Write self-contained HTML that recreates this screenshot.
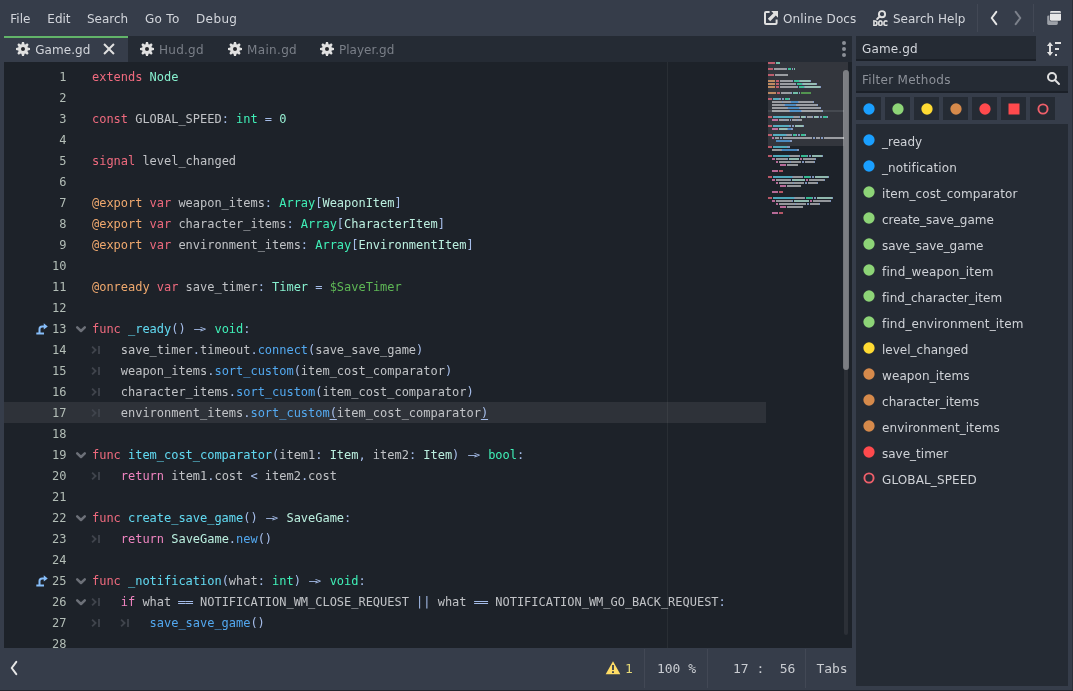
<!DOCTYPE html>
<html lang="en">
<head>
<meta charset="utf-8">
<title>Game.gd - Script Editor</title>
<style>
*{box-sizing:border-box;margin:0;padding:0}
html,body{width:1073px;height:691px;overflow:hidden;background:#363d4a}
body{position:relative;will-change:transform;font-family:"DejaVu Sans", "Liberation Sans", sans-serif;font-size:12px;color:#d2d5db;-webkit-font-smoothing:antialiased}
.abs,.ui,.sep,.ico{position:absolute}
svg{display:block}
.ui{white-space:nowrap;line-height:16px;height:16px}
/* top bar */
#topbar{position:absolute;left:0;top:0;width:1073px;height:36px;background:#363d4a}
.menu{top:11px;color:#d3d6dc}
.sep{width:1px;background:#424855}
.ico{width:16px;height:16px;fill:#e0e0e0}
/* tab bar */
#tabbar{position:absolute;left:4px;top:36px;width:848px;height:26px;background:#252b34}
#tab-active{position:absolute;left:0;top:0;width:124px;height:26px;background:#363d4a;border-top:2px solid #62b469}
.tab-t{top:42px}
.tab-t.dim{color:#7a7f88}
/* code area */
#code{position:absolute;left:4px;top:62px;width:848px;height:586px;background:#1d2229;overflow:hidden;
  font-family:"DejaVu Sans Mono", "Liberation Mono", monospace;font-size:12px;letter-spacing:-.024px;color:#cdcfd2}
#guide{position:absolute;left:663px;top:0;width:1px;height:586px;background:rgba(255,255,255,.055);z-index:2}
.ln{position:absolute;left:0;width:762px;height:21px;line-height:23px;white-space:pre}
.ln.cur{background:#2e3239}
.ln .no{position:absolute;left:0;width:62.4px;text-align:right;color:#b3beb7}
.ln .src{position:absolute;left:88px;top:0;tab-size:4;-moz-tab-size:4;opacity:.93}
.ln .fold{position:absolute;left:69.3px;top:2.7px;width:16px;height:16px;stroke:#6c7078}
.ln .ovr{position:absolute;left:30.6px;top:4px;width:14px;height:14px;fill:#86bdf9}
.tm{position:absolute;top:5.6px;width:10px;height:10px;stroke:#40454d}
.kw{color:#ff7085}.cf{color:#ff8ccc}.bt{color:#42ffc2}.et{color:#8fffdb}.ut{color:#c7ffed}
.sy,.ar,.eq{color:#b0c9f8}.nu{color:#a1ffe0}.fn{color:#57b3ff}.fd{color:#66e6ff}.an{color:#ffb373}
.nd{color:#63c259}
.ah,.ag,.e1,.e2{display:inline-block;height:21px;vertical-align:top}
.ah{transform:translate(1.7px,-.2px) scale(2.7,.8)}
.ag{transform:translate(-.6px,.3px) scale(.85,.72)}
.e1{transform:translate(.3px,0) scaleX(1.2)}
.e2{transform:translate(-.3px,0) scaleX(1.2)}
.bm{color:#b0c9f8;text-decoration:underline;text-underline-offset:2px}
/* minimap */
#mmview{position:absolute;left:764px;top:0;width:80px;height:84px;background:#33363d}
#mmcur{position:absolute;left:764px;top:48px;width:80px;height:2px;background:#454950}
.mm{position:absolute;left:764px;top:0;opacity:.68;overflow:hidden}
#vtrack{position:absolute;left:840px;top:8px;width:4px;height:565px;background:#2c3037;border-radius:2px}
#vthumb{position:absolute;left:839px;top:8px;width:6px;height:300px;background:rgba(255,255,255,.38);border-radius:3px}
#dots{position:absolute;left:842px;top:41px;width:4px;height:16px}
#dots i{position:absolute;left:0;width:4px;height:4px;border-radius:2px;background:#8b8f97}
/* status bar */
#status{position:absolute;left:0;top:648px;width:856px;height:43px;background:#363d4a}
.st{font-family:"DejaVu Sans Mono", "Liberation Mono", monospace;font-size:13px;color:#c9ccd1;top:661px;letter-spacing:-.03px;white-space:pre}
/* right panel */
.field{position:absolute;background:#252b34;border-bottom:2px solid #1b2028}
.ph{color:#8d9199}
.fb{position:absolute;top:97px;width:25px;height:23px;background:#252b34}
.fdot{position:absolute;left:4.7px;top:3.5px;width:16px;height:16px}
#list{position:absolute;left:856px;top:124px;width:212px;height:562px;background:#252b34}
.it{position:absolute;left:0;width:212px;height:26px}
.it .dot{position:absolute;left:5.3px;top:4.2px;width:16px;height:16px}
.it span{position:absolute;left:26px;top:6px;line-height:16px;white-space:nowrap;color:#cfd2d7}
#edge-r{position:absolute;left:1072px;top:0;width:1px;height:691px;background:#2a2f39}
#edge-b{position:absolute;left:0;top:690px;width:1073px;height:1px;background:#23272f}

</style>
</head>
<body>

<div id="topbar"></div>
<span class="ui menu" style="left:10.3px">File</span>
<span class="ui menu" style="left:47.3px">Edit</span>
<span class="ui menu" style="left:87px">Search</span>
<span class="ui menu" style="left:145px;letter-spacing:.3px">Go To</span>
<span class="ui menu" style="left:196px;letter-spacing:.38px">Debug</span>

<svg class="ico" style="left:763px;top:10px" viewBox="0 0 16 16"><path d="M3 1a2 2 0 0 0-2 2v10a2 2 0 0 0 2 2h9.6a2 2 0 0 0 2-2V9.6h-2V13H3V3h3.6V1zM8.2 1l2.2 2.2-5.6 5.6 2.4 2.4 5.6-5.6L15 7.8V1z"/></svg>
<span class="ui menu" style="left:783px;letter-spacing:.14px">Online Docs</span>
<svg class="ico" style="left:872px;top:10px" viewBox="0 0 16 16">
  <circle cx="10" cy="4.2" r="3.1" fill="none" stroke="#e0e0e0" stroke-width="1.9"/>
  <path d="M7.8 6.4 5.2 9" stroke="#e0e0e0" stroke-width="2" stroke-linecap="round"/>
  <text x="0.7" y="16" font-family='"DejaVu Sans","Liberation Sans",sans-serif' font-weight="bold" font-size="7.6" fill="#e6e6e6" stroke="#e6e6e6" stroke-width=".35" textLength="15" lengthAdjust="spacingAndGlyphs">DOC</text>
</svg>
<span class="ui menu" style="left:893px">Search Help</span>
<div class="sep" style="left:977px;top:4px;height:28px"></div>
<svg class="ico" style="left:986px;top:10px" viewBox="0 0 16 16"><path d="M10.3 1.9 5.7 8l4.6 6.1" fill="none" stroke="#e6e6e6" stroke-width="2" stroke-linecap="round" stroke-linejoin="round"/></svg>
<svg class="ico" style="left:1010px;top:10px" viewBox="0 0 16 16"><path d="M5.7 1.9 10.3 8l-4.6 6.1" fill="none" stroke="#7c818b" stroke-width="2" stroke-linecap="round" stroke-linejoin="round"/></svg>
<div class="sep" style="left:1033px;top:4px;height:28px"></div>
<svg class="ico" style="left:1046px;top:10px" viewBox="0 0 16 16">
  <rect x="1.2" y="5.4" width="10.6" height="9.5" rx="1.4" fill="#9da1a8"/>
  <rect x="3.4" y="0.5" width="12.2" height="10.8" rx="1.6" fill="#363d4a"/>
  <rect x="4" y="1" width="11" height="9.8" rx="1.4" fill="#e8e8e8"/>
  <rect x="4" y="2.8" width="11" height="0.9" fill="#363d4a"/>
</svg>

<div id="tabbar"><div id="tab-active"></div></div>
<svg class="ico" style="left:15px;top:41px" viewBox="0 0 16 16"><circle cx="8" cy="8" r="2.3" fill="#26282d"/><path d="M7 1l-.56 2.26a5 5 0 0 0-.69.28L3.76 2.34 2.34 3.76l1.2 1.99a5 5 0 0 0-.29.69L1 7v2l2.26.56a5 5 0 0 0 .28.69l-1.2 1.99 1.42 1.42 1.99-1.2a5 5 0 0 0 .69.29L7 15h2l.56-2.26a5 5 0 0 0 .69-.28l1.99 1.2 1.42-1.42-1.2-1.99a5 5 0 0 0 .29-.69L15 9V7l-2.26-.56a5 5 0 0 0-.28-.69l1.2-1.99-1.42-1.42-1.99 1.2a5 5 0 0 0-.69-.29L9 1zm1 5a2 2 0 0 1 0 4 2 2 0 0 1 0-4z"/></svg>
<span class="ui tab-t" style="left:35.2px;letter-spacing:.07px">Game.gd</span>
<svg class="ico" style="left:101.2px;top:41px" viewBox="0 0 16 16"><path d="M3.76 2.34 2.34 3.76 6.59 8l-4.25 4.24 1.42 1.42L8 9.41l4.24 4.25 1.42-1.42L9.41 8l4.25-4.24-1.42-1.42L8 6.59z"/></svg>
<svg class="ico" style="left:139px;top:41px" viewBox="0 0 16 16"><circle cx="8" cy="8" r="2.3" fill="#26282d"/><path d="M7 1l-.56 2.26a5 5 0 0 0-.69.28L3.76 2.34 2.34 3.76l1.2 1.99a5 5 0 0 0-.29.69L1 7v2l2.26.56a5 5 0 0 0 .28.69l-1.2 1.99 1.42 1.42 1.99-1.2a5 5 0 0 0 .69.29L7 15h2l.56-2.26a5 5 0 0 0 .69-.28l1.99 1.2 1.42-1.42-1.2-1.99a5 5 0 0 0 .29-.69L15 9V7l-2.26-.56a5 5 0 0 0-.28-.69l1.2-1.99-1.42-1.42-1.99 1.2a5 5 0 0 0-.69-.29L9 1zm1 5a2 2 0 0 1 0 4 2 2 0 0 1 0-4z"/></svg>
<span class="ui tab-t dim" style="left:159px;letter-spacing:.25px">Hud.gd</span>
<svg class="ico" style="left:227px;top:41px" viewBox="0 0 16 16"><circle cx="8" cy="8" r="2.3" fill="#26282d"/><path d="M7 1l-.56 2.26a5 5 0 0 0-.69.28L3.76 2.34 2.34 3.76l1.2 1.99a5 5 0 0 0-.29.69L1 7v2l2.26.56a5 5 0 0 0 .28.69l-1.2 1.99 1.42 1.42 1.99-1.2a5 5 0 0 0 .69.29L7 15h2l.56-2.26a5 5 0 0 0 .69-.28l1.99 1.2 1.42-1.42-1.2-1.99a5 5 0 0 0 .29-.69L15 9V7l-2.26-.56a5 5 0 0 0-.28-.69l1.2-1.99-1.42-1.42-1.99 1.2a5 5 0 0 0-.69-.29L9 1zm1 5a2 2 0 0 1 0 4 2 2 0 0 1 0-4z"/></svg>
<span class="ui tab-t dim" style="left:247px;letter-spacing:.34px">Main.gd</span>
<svg class="ico" style="left:319px;top:41px" viewBox="0 0 16 16"><circle cx="8" cy="8" r="2.3" fill="#26282d"/><path d="M7 1l-.56 2.26a5 5 0 0 0-.69.28L3.76 2.34 2.34 3.76l1.2 1.99a5 5 0 0 0-.29.69L1 7v2l2.26.56a5 5 0 0 0 .28.69l-1.2 1.99 1.42 1.42 1.99-1.2a5 5 0 0 0 .69.29L7 15h2l.56-2.26a5 5 0 0 0 .69-.28l1.99 1.2 1.42-1.42-1.2-1.99a5 5 0 0 0 .29-.69L15 9V7l-2.26-.56a5 5 0 0 0-.28-.69l1.2-1.99-1.42-1.42-1.99 1.2a5 5 0 0 0-.69-.29L9 1zm1 5a2 2 0 0 1 0 4 2 2 0 0 1 0-4z"/></svg>
<span class="ui tab-t dim" style="left:339px">Player.gd</span>
<div id="dots"><i style="top:0"></i><i style="top:6px"></i><i style="top:12px"></i></div>

<div id="code">
<div id="guide"></div>
<div class="ln" style="top:4px"><span class="no">1</span><span class="src"><span class="kw">extends</span> <span class="et">Node</span></span></div>
<div class="ln" style="top:25px"><span class="no">2</span><span class="src"></span></div>
<div class="ln" style="top:46px"><span class="no">3</span><span class="src"><span class="kw">const</span> GLOBAL_SPEED<span class="sy">:</span> <span class="bt">int</span> <span class="sy">=</span> <span class="nu">0</span></span></div>
<div class="ln" style="top:67px"><span class="no">4</span><span class="src"></span></div>
<div class="ln" style="top:88px"><span class="no">5</span><span class="src"><span class="kw">signal</span> level_changed</span></div>
<div class="ln" style="top:109px"><span class="no">6</span><span class="src"></span></div>
<div class="ln" style="top:130px"><span class="no">7</span><span class="src"><span class="an">@export</span> <span class="kw">var</span> weapon_items<span class="sy">:</span> <span class="bt">Array</span><span class="sy">[</span><span class="ut">WeaponItem</span><span class="sy">]</span></span></div>
<div class="ln" style="top:151px"><span class="no">8</span><span class="src"><span class="an">@export</span> <span class="kw">var</span> character_items<span class="sy">:</span> <span class="bt">Array</span><span class="sy">[</span><span class="ut">CharacterItem</span><span class="sy">]</span></span></div>
<div class="ln" style="top:172px"><span class="no">9</span><span class="src"><span class="an">@export</span> <span class="kw">var</span> environment_items<span class="sy">:</span> <span class="bt">Array</span><span class="sy">[</span><span class="ut">EnvironmentItem</span><span class="sy">]</span></span></div>
<div class="ln" style="top:193px"><span class="no">10</span><span class="src"></span></div>
<div class="ln" style="top:214px"><span class="no">11</span><span class="src"><span class="an">@onready</span> <span class="kw">var</span> save_timer<span class="sy">:</span> <span class="et">Timer</span> <span class="sy">=</span> <span class="nd">$SaveTimer</span></span></div>
<div class="ln" style="top:235px"><span class="no">12</span><span class="src"></span></div>
<div class="ln" style="top:256px"><span class="no">13</span><svg class="ovr" viewBox="0 0 16 16"><path d="M10 1.5v2.4H8.2A4.2 4.2 0 0 0 4 8.1V12H1.5v2.2h8.8V12H6.3V8.1a1.9 1.9 0 0 1 1.9-1.9H10v2.4l4.6-3.55z"/></svg><svg class="fold" viewBox="0 0 16 16"><g><path d="M4.2 6.3 8 10 11.8 6.3" fill="none" stroke-width="2.5" stroke-linecap="round" stroke-linejoin="round"/></svg><span class="src"><span class="kw">func</span> <span class="fd">_ready</span><span class="sy">()</span> <span class="ar"><span class="ah">-</span><span class="ag">&gt;</span></span> <span class="bt">void</span><span class="sy">:</span></span></div>
<div class="ln" style="top:277px"><span class="no">14</span><svg class="tm" style="left:87.0px" viewBox="0 0 10 10"><g><path d="M1.1 1.7 4.6 5 1.1 8.3M8 0.9v8.2" fill="none" stroke-width="1.8"/></svg><span class="src">	save_timer<span class="sy">.</span>timeout<span class="sy">.</span><span class="fn">connect</span><span class="sy">(</span>save_save_game<span class="sy">)</span></span></div>
<div class="ln" style="top:298px"><span class="no">15</span><svg class="tm" style="left:87.0px" viewBox="0 0 10 10"><g><path d="M1.1 1.7 4.6 5 1.1 8.3M8 0.9v8.2" fill="none" stroke-width="1.8"/></svg><span class="src">	weapon_items<span class="sy">.</span><span class="fn">sort_custom</span><span class="sy">(</span>item_cost_comparator<span class="sy">)</span></span></div>
<div class="ln" style="top:319px"><span class="no">16</span><svg class="tm" style="left:87.0px" viewBox="0 0 10 10"><g><path d="M1.1 1.7 4.6 5 1.1 8.3M8 0.9v8.2" fill="none" stroke-width="1.8"/></svg><span class="src">	character_items<span class="sy">.</span><span class="fn">sort_custom</span><span class="sy">(</span>item_cost_comparator<span class="sy">)</span></span></div>
<div class="ln cur" style="top:340px"><span class="no">17</span><svg class="tm" style="left:87.0px" viewBox="0 0 10 10"><g><path d="M1.1 1.7 4.6 5 1.1 8.3M8 0.9v8.2" fill="none" stroke-width="1.8"/></svg><span class="src">	environment_items<span class="sy">.</span><span class="fn">sort_custom</span><span class="bm">(</span>item_cost_comparator<span class="bm">)</span></span></div>
<div class="ln" style="top:361px"><span class="no">18</span><span class="src"></span></div>
<div class="ln" style="top:382px"><span class="no">19</span><svg class="fold" viewBox="0 0 16 16"><g><path d="M4.2 6.3 8 10 11.8 6.3" fill="none" stroke-width="2.5" stroke-linecap="round" stroke-linejoin="round"/></svg><span class="src"><span class="kw">func</span> <span class="fd">item_cost_comparator</span><span class="sy">(</span>item1<span class="sy">:</span> <span class="ut">Item</span><span class="sy">,</span> item2<span class="sy">:</span> <span class="ut">Item</span><span class="sy">)</span> <span class="ar"><span class="ah">-</span><span class="ag">&gt;</span></span> <span class="bt">bool</span><span class="sy">:</span></span></div>
<div class="ln" style="top:403px"><span class="no">20</span><svg class="tm" style="left:87.0px" viewBox="0 0 10 10"><g><path d="M1.1 1.7 4.6 5 1.1 8.3M8 0.9v8.2" fill="none" stroke-width="1.8"/></svg><span class="src">	<span class="cf">return</span> item1<span class="sy">.</span>cost <span class="sy">&lt;</span> item2<span class="sy">.</span>cost</span></div>
<div class="ln" style="top:424px"><span class="no">21</span><span class="src"></span></div>
<div class="ln" style="top:445px"><span class="no">22</span><svg class="fold" viewBox="0 0 16 16"><g><path d="M4.2 6.3 8 10 11.8 6.3" fill="none" stroke-width="2.5" stroke-linecap="round" stroke-linejoin="round"/></svg><span class="src"><span class="kw">func</span> <span class="fd">create_save_game</span><span class="sy">()</span> <span class="ar"><span class="ah">-</span><span class="ag">&gt;</span></span> <span class="ut">SaveGame</span><span class="sy">:</span></span></div>
<div class="ln" style="top:466px"><span class="no">23</span><svg class="tm" style="left:87.0px" viewBox="0 0 10 10"><g><path d="M1.1 1.7 4.6 5 1.1 8.3M8 0.9v8.2" fill="none" stroke-width="1.8"/></svg><span class="src">	<span class="cf">return</span> <span class="ut">SaveGame</span><span class="sy">.</span><span class="fn">new</span><span class="sy">()</span></span></div>
<div class="ln" style="top:487px"><span class="no">24</span><span class="src"></span></div>
<div class="ln" style="top:508px"><span class="no">25</span><svg class="ovr" viewBox="0 0 16 16"><path d="M10 1.5v2.4H8.2A4.2 4.2 0 0 0 4 8.1V12H1.5v2.2h8.8V12H6.3V8.1a1.9 1.9 0 0 1 1.9-1.9H10v2.4l4.6-3.55z"/></svg><svg class="fold" viewBox="0 0 16 16"><g><path d="M4.2 6.3 8 10 11.8 6.3" fill="none" stroke-width="2.5" stroke-linecap="round" stroke-linejoin="round"/></svg><span class="src"><span class="kw">func</span> <span class="fd">_notification</span><span class="sy">(</span>what<span class="sy">:</span> <span class="bt">int</span><span class="sy">)</span> <span class="ar"><span class="ah">-</span><span class="ag">&gt;</span></span> <span class="bt">void</span><span class="sy">:</span></span></div>
<div class="ln" style="top:529px"><span class="no">26</span><svg class="fold" viewBox="0 0 16 16"><g><path d="M4.2 6.3 8 10 11.8 6.3" fill="none" stroke-width="2.5" stroke-linecap="round" stroke-linejoin="round"/></svg><svg class="tm" style="left:87.0px" viewBox="0 0 10 10"><g><path d="M1.1 1.7 4.6 5 1.1 8.3M8 0.9v8.2" fill="none" stroke-width="1.8"/></svg><span class="src">	<span class="cf">if</span> what <span class="eq"><span class="e1">=</span><span class="e2">=</span></span> NOTIFICATION_WM_CLOSE_REQUEST <span class="sy">||</span> what <span class="eq"><span class="e1">=</span><span class="e2">=</span></span> NOTIFICATION_WM_GO_BACK_REQUEST<span class="sy">:</span></span></div>
<div class="ln" style="top:550px"><span class="no">27</span><svg class="tm" style="left:87.0px" viewBox="0 0 10 10"><g><path d="M1.1 1.7 4.6 5 1.1 8.3M8 0.9v8.2" fill="none" stroke-width="1.8"/></svg><svg class="tm" style="left:115.8px" viewBox="0 0 10 10"><g><path d="M1.1 1.7 4.6 5 1.1 8.3M8 0.9v8.2" fill="none" stroke-width="1.8"/></svg><span class="src">		<span class="fn">save_save_game</span><span class="sy">()</span></span></div>
<div class="ln" style="top:571px"><span class="no">28</span><span class="src"></span></div>
<div id="mmview"></div>
<div id="mmcur"></div>
<svg class="mm" width="78" height="153" viewBox="0 0 78 153" shape-rendering="crispEdges"><path fill="#ff7085" d="M0 0h7v2h-7zM0 6h5v2h-5zM0 12h6v2h-6zM8 18h3v2h-3zM8 21h3v2h-3zM8 24h3v2h-3zM9 30h3v2h-3zM0 36h4v2h-4zM0 54h4v2h-4zM0 63h4v2h-4zM0 72h4v2h-4zM0 84h4v2h-4zM0 93h4v2h-4zM11 108h4v2h-4zM0 114h4v2h-4zM11 129h4v2h-4zM0 135h4v2h-4zM11 150h4v2h-4z"/><path fill="#8fffdb" d="M8 0h4v2h-4zM25 30h5v2h-5z"/><path fill="#cdcfd2" d="M6 6h12v2h-12zM7 12h13v2h-13zM12 18h12v2h-12zM12 21h15v2h-15zM12 24h17v2h-17zM13 30h10v2h-10zM4 39h10v2h-10zM15 39h7v2h-7zM31 39h14v2h-14zM4 42h12v2h-12zM29 42h20v2h-20zM4 45h15v2h-15zM32 45h20v2h-20zM4 48h17v2h-17zM34 48h20v2h-20zM26 54h5v2h-5zM39 54h5v2h-5zM11 57h5v2h-5zM17 57h4v2h-4zM24 57h5v2h-5zM30 57h4v2h-4zM19 72h4v2h-4zM7 75h4v2h-4zM15 75h29v2h-29zM48 75h4v2h-4zM56 75h31v2h-31zM4 87h9v2h-9zM22 93h9v2h-9zM8 96h11v2h-11zM35 96h12v2h-12zM11 99h11v2h-11zM23 99h10v2h-10zM37 99h9v2h-9zM19 102h11v2h-11zM25 114h9v2h-9zM8 117h14v2h-14zM41 117h15v2h-15zM11 120h14v2h-14zM26 120h10v2h-10zM40 120h9v2h-9zM19 123h14v2h-14zM27 135h9v2h-9zM8 138h16v2h-16zM45 138h17v2h-17zM11 141h16v2h-16zM28 141h10v2h-10zM42 141h9v2h-9zM19 144h16v2h-16z"/><path fill="#abc9ff" d="M18 6h1v2h-1zM24 6h1v2h-1zM24 18h1v2h-1zM31 18h1v2h-1zM42 18h1v2h-1zM27 21h1v2h-1zM34 21h1v2h-1zM48 21h1v2h-1zM29 24h1v2h-1zM36 24h1v2h-1zM52 24h1v2h-1zM23 30h1v2h-1zM31 30h1v2h-1zM11 36h2v2h-2zM14 36h2v2h-2zM21 36h1v2h-1zM14 39h1v2h-1zM22 39h1v2h-1zM30 39h1v2h-1zM45 39h1v2h-1zM16 42h1v2h-1zM28 42h1v2h-1zM49 42h1v2h-1zM19 45h1v2h-1zM31 45h1v2h-1zM52 45h1v2h-1zM21 48h1v2h-1zM33 48h1v2h-1zM54 48h1v2h-1zM25 54h1v2h-1zM31 54h1v2h-1zM37 54h1v2h-1zM44 54h1v2h-1zM50 54h1v2h-1zM52 54h2v2h-2zM59 54h1v2h-1zM16 57h1v2h-1zM22 57h1v2h-1zM29 57h1v2h-1zM21 63h2v2h-2zM24 63h2v2h-2zM35 63h1v2h-1zM19 66h1v2h-1zM23 66h2v2h-2zM18 72h1v2h-1zM23 72h1v2h-1zM28 72h1v2h-1zM30 72h2v2h-2zM37 72h1v2h-1zM12 75h2v2h-2zM45 75h2v2h-2zM53 75h2v2h-2zM87 75h1v2h-1zM22 78h2v2h-2zM19 84h3v2h-3zM13 87h1v2h-1zM29 87h2v2h-2zM21 93h1v2h-1zM31 93h1v2h-1zM39 93h1v2h-1zM41 93h2v2h-2zM54 93h1v2h-1zM19 96h1v2h-1zM47 96h1v2h-1zM22 99h1v2h-1zM34 99h2v2h-2zM46 99h1v2h-1zM24 114h1v2h-1zM34 114h1v2h-1zM42 114h1v2h-1zM44 114h2v2h-2zM60 114h1v2h-1zM22 117h1v2h-1zM56 117h1v2h-1zM25 120h1v2h-1zM37 120h2v2h-2zM49 120h1v2h-1zM26 135h1v2h-1zM36 135h1v2h-1zM44 135h1v2h-1zM46 135h2v2h-2zM64 135h1v2h-1zM24 138h1v2h-1zM62 138h1v2h-1zM27 141h1v2h-1zM39 141h2v2h-2zM51 141h1v2h-1z"/><path fill="#42ffc2" d="M20 6h3v2h-3zM26 18h5v2h-5zM29 21h5v2h-5zM31 24h5v2h-5zM17 36h4v2h-4zM55 54h4v2h-4zM25 72h3v2h-3zM33 72h4v2h-4zM33 93h6v2h-6zM36 114h6v2h-6zM38 135h6v2h-6z"/><path fill="#a1ffe0" d="M26 6h1v2h-1z"/><path fill="#ffb373" d="M0 18h7v2h-7zM0 21h7v2h-7zM0 24h7v2h-7zM0 30h8v2h-8z"/><path fill="#c7ffed" d="M32 18h10v2h-10zM35 21h13v2h-13zM37 24h15v2h-15zM33 54h4v2h-4zM46 54h4v2h-4zM27 63h8v2h-8zM11 66h8v2h-8zM44 93h10v2h-10zM21 96h10v2h-10zM47 114h13v2h-13zM24 117h13v2h-13zM49 135h15v2h-15zM26 138h15v2h-15z"/><path fill="#63c259" d="M33 30h10v2h-10z"/><path fill="#66e6ff" d="M5 36h6v2h-6zM5 54h20v2h-20zM5 63h16v2h-16zM5 72h13v2h-13zM5 84h14v2h-14zM5 93h16v2h-16zM5 114h19v2h-19zM5 135h21v2h-21z"/><path fill="#57b3ff" d="M23 39h7v2h-7zM17 42h11v2h-11zM20 45h11v2h-11zM22 48h11v2h-11zM20 66h3v2h-3zM8 78h14v2h-14zM14 87h15v2h-15z"/><path fill="#ff8ccc" d="M4 57h6v2h-6zM4 66h6v2h-6zM4 75h2v2h-2zM4 96h3v2h-3zM32 96h2v2h-2zM8 99h2v2h-2zM12 102h6v2h-6zM4 108h6v2h-6zM4 117h3v2h-3zM38 117h2v2h-2zM8 120h2v2h-2zM12 123h6v2h-6zM4 129h6v2h-6zM4 138h3v2h-3zM42 138h2v2h-2zM8 141h2v2h-2zM12 144h6v2h-6zM4 150h6v2h-6z"/></svg>
<div id="vtrack"></div>
<div id="vthumb"></div>
</div>

<div id="status"></div>
<svg class="ico" style="left:6px;top:660px" viewBox="0 0 16 16"><path d="M10.3 1.9 5.7 8l4.6 6.1" fill="none" stroke="#e6e6e6" stroke-width="2" stroke-linecap="round" stroke-linejoin="round"/></svg>
<svg class="ico" style="left:605px;top:660px" viewBox="0 0 16 16"><path d="M8 1.2 15.3 14.2H0.7z" fill="#ffdd65"/><path d="M7.1 5h1.8v5H7.1zM7.1 11.2h1.8v1.8H7.1z" fill="#363d4a"/></svg>
<span class="ui st" style="left:625px;color:#e5d977">1</span>
<div class="sep" style="left:644px;top:649px;height:39px"></div>
<span class="ui st" style="left:657px">100 %</span>
<div class="sep" style="left:707px;top:649px;height:39px"></div>
<span class="ui st" style="left:733px">17 :  56</span>
<div class="sep" style="left:805px;top:649px;height:39px"></div>
<span class="ui st" style="left:816.4px">Tabs</span>

<div class="field" style="left:856px;top:36px;width:180px;height:25px"></div>
<span class="ui" style="left:862px;top:41px;color:#d3d6dc;letter-spacing:.14px">Game.gd</span>
<svg class="ico" style="left:1046px;top:41px" viewBox="0 0 16 16"><path d="M4 1 .9 5H3v6H.9L4 15l3.1-4H5V5h2.1zM9 1h6v2H9zM9 7h4v2H9zM9 13h2v2H9z"/></svg>
<div class="field" style="left:856px;top:66px;width:212px;height:27px"></div>
<span class="ui ph" style="left:862px;top:72px;letter-spacing:.28px">Filter Methods</span>
<svg class="ico" style="left:1045.8px;top:70.8px" viewBox="0 0 16 16"><circle cx="6" cy="6" r="4" fill="none" stroke="#e0e0e0" stroke-width="2"/><path d="M9 9l4 4" stroke="#e0e0e0" stroke-width="2" stroke-linecap="round"/></svg>
<div class="fb" style="left:856px"><svg class="fdot" viewBox="0 0 16 16"><circle cx="8" cy="8" r="5.65" fill="#1a9fff"/></svg></div>
<div class="fb" style="left:885px"><svg class="fdot" viewBox="0 0 16 16"><circle cx="8" cy="8" r="5.65" fill="#8dd477"/></svg></div>
<div class="fb" style="left:914px"><svg class="fdot" viewBox="0 0 16 16"><circle cx="8" cy="8" r="5.65" fill="#ffdb33"/></svg></div>
<div class="fb" style="left:943px"><svg class="fdot" viewBox="0 0 16 16"><circle cx="8" cy="8" r="5.65" fill="#d68a4b"/></svg></div>
<div class="fb" style="left:972px"><svg class="fdot" viewBox="0 0 16 16"><circle cx="8" cy="8" r="5.65" fill="#ff4a4d"/></svg></div>
<div class="fb" style="left:1001px"><svg class="fdot" viewBox="0 0 16 16"><rect x="2.5" y="2.5" width="11" height="11" fill="#ff4a4d"/></svg></div>
<div class="fb" style="left:1030px"><svg class="fdot" viewBox="0 0 16 16"><circle cx="8" cy="8" r="4.6" fill="none" stroke="#ee5f6a" stroke-width="1.9"/></svg></div>
<div id="list">
<div class="it" style="top:4px"><svg class="dot" viewBox="0 0 16 16"><circle cx="8" cy="8" r="5.65" fill="#1a9fff"/></svg><span>_ready</span></div>
<div class="it" style="top:30px"><svg class="dot" viewBox="0 0 16 16"><circle cx="8" cy="8" r="5.65" fill="#1a9fff"/></svg><span style="letter-spacing:0.112px">_notification</span></div>
<div class="it" style="top:56px"><svg class="dot" viewBox="0 0 16 16"><circle cx="8" cy="8" r="5.65" fill="#8dd477"/></svg><span style="letter-spacing:0.083px">item_cost_comparator</span></div>
<div class="it" style="top:82px"><svg class="dot" viewBox="0 0 16 16"><circle cx="8" cy="8" r="5.65" fill="#8dd477"/></svg><span style="letter-spacing:-0.026px">create_save_game</span></div>
<div class="it" style="top:108px"><svg class="dot" viewBox="0 0 16 16"><circle cx="8" cy="8" r="5.65" fill="#8dd477"/></svg><span style="letter-spacing:-0.06px">save_save_game</span></div>
<div class="it" style="top:134px"><svg class="dot" viewBox="0 0 16 16"><circle cx="8" cy="8" r="5.65" fill="#8dd477"/></svg><span style="letter-spacing:0.158px">find_weapon_item</span></div>
<div class="it" style="top:160px"><svg class="dot" viewBox="0 0 16 16"><circle cx="8" cy="8" r="5.65" fill="#8dd477"/></svg><span style="letter-spacing:0.04px">find_character_item</span></div>
<div class="it" style="top:186px"><svg class="dot" viewBox="0 0 16 16"><circle cx="8" cy="8" r="5.65" fill="#8dd477"/></svg><span style="letter-spacing:0.155px">find_environment_item</span></div>
<div class="it" style="top:212px"><svg class="dot" viewBox="0 0 16 16"><circle cx="8" cy="8" r="5.65" fill="#ffdb33"/></svg><span>level_changed</span></div>
<div class="it" style="top:238px"><svg class="dot" viewBox="0 0 16 16"><circle cx="8" cy="8" r="5.65" fill="#d68a4b"/></svg><span style="letter-spacing:0.1px">weapon_items</span></div>
<div class="it" style="top:264px"><svg class="dot" viewBox="0 0 16 16"><circle cx="8" cy="8" r="5.65" fill="#d68a4b"/></svg><span style="letter-spacing:0.03px">character_items</span></div>
<div class="it" style="top:290px"><svg class="dot" viewBox="0 0 16 16"><circle cx="8" cy="8" r="5.65" fill="#d68a4b"/></svg><span style="letter-spacing:0.12px">environment_items</span></div>
<div class="it" style="top:316px"><svg class="dot" viewBox="0 0 16 16"><circle cx="8" cy="8" r="5.65" fill="#ff4a4d"/></svg><span>save_timer</span></div>
<div class="it" style="top:342px"><svg class="dot" viewBox="0 0 16 16"><circle cx="8" cy="8" r="4.6" fill="none" stroke="#ee5f6a" stroke-width="1.9"/></svg><span style="letter-spacing:0.12px">GLOBAL_SPEED</span></div>
</div>
<div id="edge-r"></div>
<div id="edge-b"></div>

</body>
</html>
